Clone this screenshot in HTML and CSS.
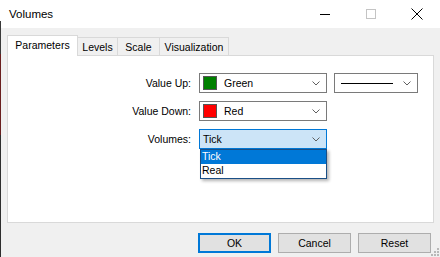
FILE: index.html
```html
<!DOCTYPE html>
<html lang="en">
<head>
    <title>Volumes</title>
    <link rel="stylesheet" href="styles.css">
</head>
<body>
    <div class="window">
        <div class="titlebar">
            <div class="title">Volumes</div>
            <div class="caption-btn">
                <svg width="10" height="10" viewBox="0 0 10 10"><path d="M0 5.5H10" stroke="#000" stroke-width="1"/></svg>
            </div>
            <div class="caption-btn">
                <svg width="10" height="10" viewBox="0 0 10 10"><rect x="0.5" y="0.5" width="9" height="9" fill="none" stroke="#c4c4c4"/></svg>
            </div>
            <div class="caption-btn">
                <svg width="12" height="12" viewBox="0 0 12 12"><path d="M0.5 0.5L11.5 11.5M11.5 0.5L0.5 11.5" stroke="#000" stroke-width="1"/></svg>
            </div>
        </div>

        <div class="main">
            <div class="tabs">
                <div class="tab tab-active tab-params">Parameters</div>
                <div class="tab tab-levels">Levels</div>
                <div class="tab tab-scale">Scale</div>
                <div class="tab tab-vis">Visualization</div>
            </div>
            <div class="panel">
                <div class="form">
                    <div class="label">Value Up:</div>
                    <div class="combo">
                        <span class="swatch swatch-green"></span>
                        <span class="combo-text">Green</span>
                        <svg class="chevron" width="8" height="5" viewBox="0 0 8 5"><path d="M0.5 0.5L4 4L7.5 0.5" fill="none" stroke="#606060"/></svg>
                    </div>
                    <div class="combo combo-line">
                        <span class="line-sample"></span>
                        <svg class="chevron" width="8" height="5" viewBox="0 0 8 5"><path d="M0.5 0.5L4 4L7.5 0.5" fill="none" stroke="#606060"/></svg>
                    </div>

                    <div class="label">Value Down:</div>
                    <div class="combo">
                        <span class="swatch swatch-red"></span>
                        <span class="combo-text">Red</span>
                        <svg class="chevron" width="8" height="5" viewBox="0 0 8 5"><path d="M0.5 0.5L4 4L7.5 0.5" fill="none" stroke="#606060"/></svg>
                    </div>
                    <div></div>

                    <div class="label">Volumes:</div>
                    <div class="combo combo-focus">
                        <span class="combo-text combo-plain">Tick</span>
                        <svg class="chevron" width="8" height="5" viewBox="0 0 8 5"><path d="M0.5 0.5L4 4L7.5 0.5" fill="none" stroke="#606060"/></svg>
                        <div class="dropdown">
                            <div class="option option-selected">Tick</div>
                            <div class="option">Real</div>
                        </div>
                    </div>
                    <div></div>
                </div>
            </div>

            <div class="buttons">
                <div class="btn btn-default">OK</div>
                <div class="btn">Cancel</div>
                <div class="btn">Reset</div>
            </div>
        </div>

        <svg class="grip" width="8" height="8" viewBox="0 0 8 8">
            <rect x="6" y="0" width="2" height="2" fill="#b8b8b8"/>
            <rect x="3" y="3" width="2" height="2" fill="#b8b8b8"/>
            <rect x="6" y="3" width="2" height="2" fill="#b8b8b8"/>
            <rect x="0" y="6" width="2" height="2" fill="#b8b8b8"/>
            <rect x="3" y="6" width="2" height="2" fill="#b8b8b8"/>
            <rect x="6" y="6" width="2" height="2" fill="#b8b8b8"/>
        </svg>
    </div>
</body>
</html>
```

FILE: styles.css
```css
* {
    box-sizing: border-box;
}
body {
    margin: 0;
    font-family: "Liberation Sans", Arial, sans-serif;
    font-size: 10.5px;
    color: #000;
    background: #f0f0f0;
}
.window {
    position: relative;
    width: 440px;
    height: 257px;
    background: #f0f0f0;
    border-left: 1px solid transparent;
    border-image: linear-gradient(to bottom, #fff 0 22px, #3a3a3a 22px 55px, #6a1f1f 55px 135px, #2e2e2e 135px) 1;
    overflow: hidden;
}
.titlebar {
    display: flex;
    align-items: center;
    height: 28px;
    background: #fff;
}
.title {
    flex: 1;
    padding-left: 8px;
    font-size: 11.5px;
    padding-bottom: 1px;
}
.caption-btn {
    width: 46px;
    height: 28px;
    display: flex;
    align-items: center;
    justify-content: center;
    padding-bottom: 1px;
}
.main {
    padding: 7px 5px 0 6px;
}
.tabs {
    display: flex;
    align-items: flex-end;
    height: 20px;
}
.tab {
    height: 18px;
    border: 1px solid #d9d9d9;
    border-bottom: none;
    background: #f0f0f0;
    display: flex;
    align-items: center;
    justify-content: center;
    margin-left: -1px;
    padding-top: 1px;
}
.tab-active {
    position: relative;
    z-index: 1;
    height: 21px;
    margin-bottom: -1px;
    margin-left: 0;
    background: #fff;
    padding-top: 0;
    padding-bottom: 2px;
}
.tab-params { width: 71px; }
.tab-levels { width: 41px; }
.tab-scale { width: 43px; }
.tab-vis { width: 70px; }
.panel {
    height: 168px;
    width: 427px;
    background: #fff;
    border: 1px solid #d9d9d9;
    padding-top: 17px;
}
.form {
    display: grid;
    grid-template-columns: 183px 128px 83px;
    grid-auto-rows: 20px;
    column-gap: 8px;
    row-gap: 8px;
}
.form .combo-line {
    margin-left: -1px;
}
.label {
    display: flex;
    align-items: center;
    justify-content: flex-end;
    padding-bottom: 1px;
}
.combo {
    position: relative;
    display: flex;
    align-items: center;
    border: 1px solid #7a7a7a;
    background: #fff;
    padding-left: 3px;
}
.swatch {
    width: 14px;
    height: 14px;
    border: 1px solid #555;
    flex: none;
}
.swatch-green { background: #008000; }
.swatch-red { background: #ff0000; }
.combo-text {
    margin-left: 7px;
    flex: 1;
    padding-bottom: 1px;
}
.combo-plain {
    margin-left: 0;
}
.chevron {
    margin-right: 6px;
    flex: none;
}
.line-sample {
    margin-left: 3px;
    width: 52px;
    height: 1px;
    background: #000;
    flex: none;
    margin-right: auto;
}
.combo-focus {
    border-color: #0078d7;
    background: #cce4f7;
}
.dropdown {
    position: absolute;
    top: 19px;
    left: 0;
    width: 127px;
    background: #fff;
    border: 1px solid #1a4f86;
    box-shadow: 2px 2px 3px rgba(0, 0, 0, 0.3);
    z-index: 2;
}
.option {
    height: 14px;
    line-height: 13px;
    padding-left: 1px;
}
.option-selected {
    background: #0078d7;
    color: #fff;
}
.buttons {
    display: flex;
    justify-content: flex-end;
    gap: 7px;
    margin-top: 10px;
    padding-right: 4px;
}
.btn {
    width: 73px;
    height: 20px;
    background: #e1e1e1;
    border: 1px solid #adadad;
    display: flex;
    align-items: center;
    justify-content: center;
    padding-bottom: 1px;
}
.btn-default {
    border: 2px solid #0078d7;
}
.grip {
    position: absolute;
    right: 1px;
    bottom: 1px;
}
```
